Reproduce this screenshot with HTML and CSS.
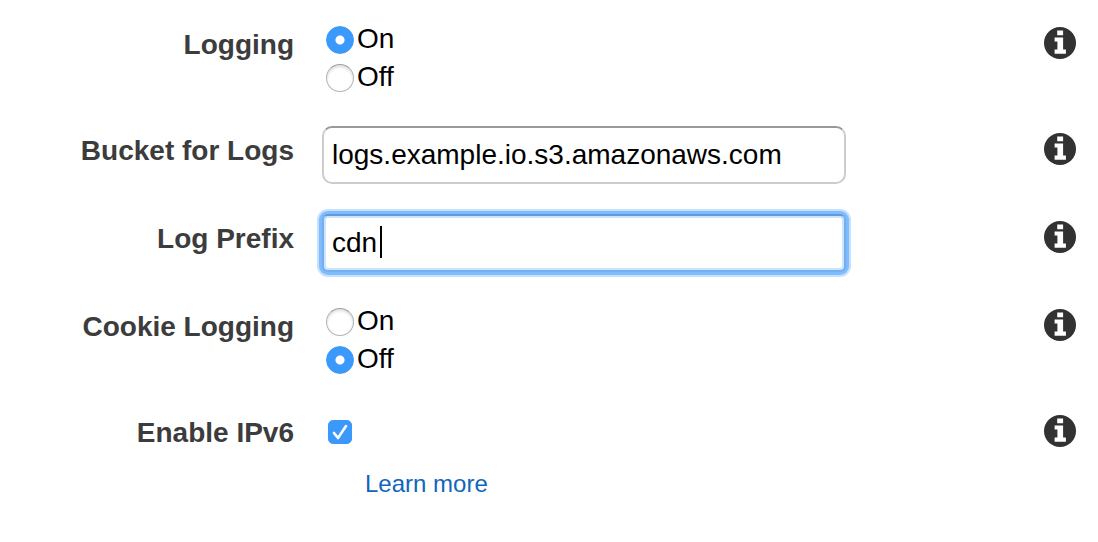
FILE: index.html
```html
<!DOCTYPE html>
<html lang="en">
<head>
<meta charset="utf-8">
<meta name="viewport" content="width=device-width, initial-scale=1">
<title>Logging settings</title>
<link rel="stylesheet" href="styles.css">
</head>
<body>
<svg class="sprite" aria-hidden="true">
  <symbol id="info" viewBox="0 0 32 32">
    <circle cx="16" cy="16" r="16" fill="#323232"/>
    <path fill="#fff" d="M13.2 3.4h5.9v4.8h-5.9zM10.6 10.4h8.5v12.2h2.8v4.1H10.6v-4.1h2.8v-8.1h-2.8z"/>
  </symbol>
</svg>
<form class="settings">
  <div class="row" role="radiogroup" aria-labelledby="logging-label">
    <span class="label" id="logging-label">Logging</span>
    <div class="field">
      <label class="option"><input class="radio" type="radio" name="logging" checked>On</label>
      <label class="option"><input class="radio" type="radio" name="logging">Off</label>
    </div>
    <button class="info" type="button" aria-label="About logging"><svg class="info-icon"><use href="#info"/></svg></button>
  </div>
  <div class="row">
    <label class="label" for="bucket">Bucket for Logs</label>
    <div class="field"><input class="text" id="bucket" type="text" value="logs.example.io.s3.amazonaws.com"></div>
    <button class="info" type="button" aria-label="About the bucket for logs"><svg class="info-icon"><use href="#info"/></svg></button>
  </div>
  <div class="row">
    <label class="label" for="prefix">Log Prefix</label>
    <div class="field"><input class="text text-active" id="prefix" type="text" value="cdn"><span class="caret"></span></div>
    <button class="info" type="button" aria-label="About the log prefix"><svg class="info-icon"><use href="#info"/></svg></button>
  </div>
  <div class="row" role="radiogroup" aria-labelledby="cookie-label">
    <span class="label" id="cookie-label">Cookie Logging</span>
    <div class="field">
      <label class="option"><input class="radio" type="radio" name="cookie">On</label>
      <label class="option"><input class="radio" type="radio" name="cookie" checked>Off</label>
    </div>
    <button class="info" type="button" aria-label="About cookie logging"><svg class="info-icon"><use href="#info"/></svg></button>
  </div>
  <div class="row">
    <label class="label" for="ipv6">Enable IPv6</label>
    <div class="field">
      <span class="check">
        <input class="checkbox" id="ipv6" type="checkbox" checked>
        <svg class="tick" viewBox="0 0 24 24" aria-hidden="true"><path d="M6 13l4 5 8-12" fill="none" stroke="#fff" stroke-width="2.6" stroke-linecap="round" stroke-linejoin="round"/></svg>
      </span>
      <a class="link" href="#learn-more">Learn more</a>
    </div>
    <button class="info" type="button" aria-label="About IPv6"><svg class="info-icon"><use href="#info"/></svg></button>
  </div>
</form>
</body>
</html>
```
FILE: styles.css
```css
* {
  box-sizing: border-box;
}

body {
  margin: 0;
  background: #fff;
  color: #000;
  font: 28px/38px "Liberation Sans", Arial, sans-serif;
}

.sprite {
  position: absolute;
  width: 0;
  height: 0;
}

.settings {
  display: flex;
  flex-direction: column;
  gap: 30px;
  padding: 20px 22px;
}

.row {
  display: grid;
  grid-template-columns: 272px minmax(0, 524px) 1fr;
  column-gap: 28px;
  align-items: start;
}

.label {
  color: #3c3c3c;
  font-weight: bold;
  line-height: 50px;
  text-align: right;
}

.field {
  position: relative;
  display: flex;
  flex-direction: column;
  align-items: flex-start;
}

.option {
  display: flex;
  align-items: flex-start;
  gap: 3px;
  padding-left: 4px;
}

.radio {
  appearance: none;
  width: 28px;
  height: 28px;
  margin: 6px 0 0;
  border: 1px solid #b4b4b4;
  border-top-color: #a0a0a0;
  border-radius: 50%;
  background: #fff;
  box-shadow: inset 0 2px 3px #ddd;
}

.radio:checked {
  border-color: #3b99fc;
  background: radial-gradient(circle, #fff 4px, #3b99fc 5px);
  box-shadow: none;
}

.text {
  width: 100%;
  height: 58px;
  padding: 0 8px;
  border: 2px solid #ccc;
  border-top-color: #999;
  border-radius: 10px;
  outline: none;
  background: #fff;
  color: #000;
  font: inherit;
}

.text-active,
.text:focus {
  border-color: #72aef0;
  border-top-color: #629bdd;
  border-radius: 6px;
  box-shadow: 0 0 0 3px #7fbcfd, 0 0 0 5px #c7e1fd, inset 0 0 0 2px #cde4fd;
}

.caret {
  position: absolute;
  top: 12px;
  left: 58px;
  width: 2px;
  height: 32px;
  background: #000;
}

.check {
  position: relative;
  display: flex;
  margin: 12px 0 0 6px;
}

.checkbox {
  appearance: none;
  width: 24px;
  height: 24px;
  margin: 0;
  border: 1px solid #3b99fc;
  border-radius: 5px;
  background: #fff;
}

.checkbox:checked {
  background: #3b99fc;
}

.tick {
  position: absolute;
  inset: 0;
  width: 24px;
  height: 24px;
  pointer-events: none;
}

.link {
  margin: 21px 0 0 43px;
  color: #1166bb;
  font-size: 24px;
  text-decoration: none;
}

.info {
  display: flex;
  justify-self: end;
  margin: 7px 0 0;
  padding: 0;
  border: 0;
  background: none;
  cursor: pointer;
}

.info-icon {
  width: 32px;
  height: 32px;
}
```
